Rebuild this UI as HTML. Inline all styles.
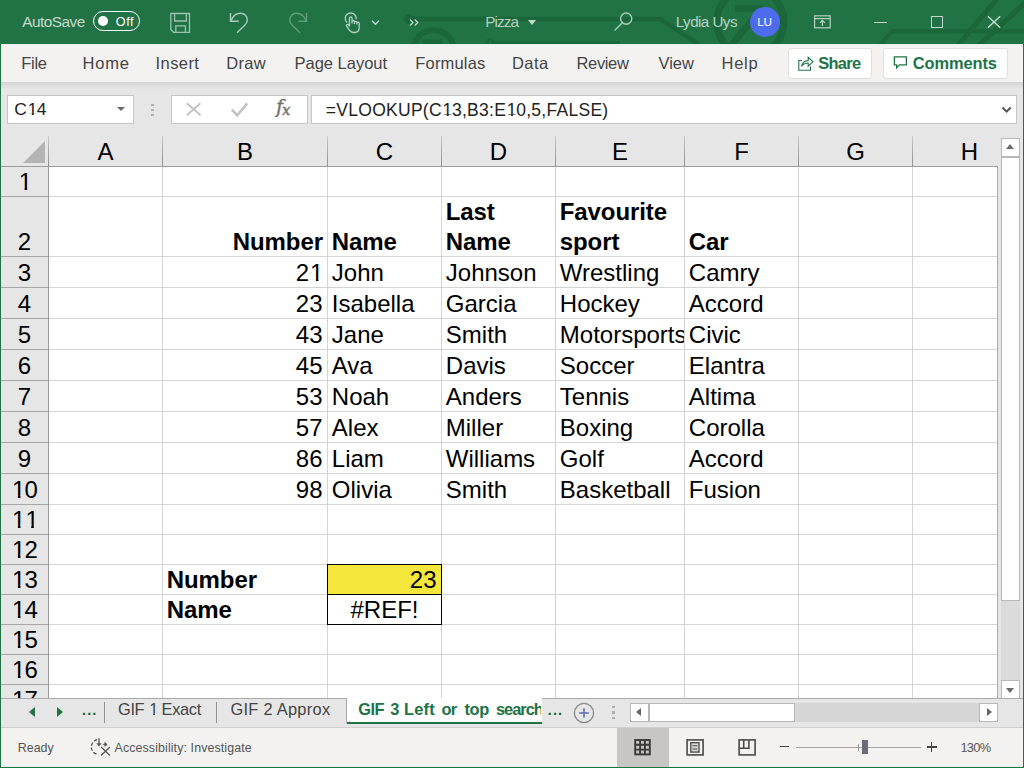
<!DOCTYPE html>
<html lang="en"><head><meta charset="utf-8"><title>Pizza - Excel</title>
<style>
html,body{margin:0;padding:0}
body{width:1024px;height:768px;position:relative;overflow:hidden;background:#e6e6e6;font-family:"Liberation Sans",sans-serif}
.r{position:absolute;display:block}
.t{position:absolute;white-space:nowrap;display:block}
.o{display:inline-block;position:relative;left:.04em;clip-path:polygon(0 0,100% 0,100% .735em,.35em .735em,.35em 100%,.24em 100%,.24em .735em,0 .735em)}
</style></head><body>
<div class="r" style="left:0px;top:0px;width:1024px;height:44px;background:#217346;"></div>
<svg class="r" style="left:0;top:0" width="1024" height="44" viewBox="0 0 1024 44" fill="none" stroke="#1b663b" stroke-width="4.4">
<circle cx="408.4" cy="18.8" r="2.6"/>
<path d="M411 19H660L699 44.5"/>
<circle cx="433.7" cy="50" r="20" stroke-width="6"/>
<path d="M422.5 43h20" stroke-width="7"/>
<path d="M492 43.2H620" stroke-width="4"/>
<circle cx="490" cy="43" r="3" stroke-width="3"/>
<circle cx="750.3" cy="22" r="33.5" stroke-width="7"/>
<path d="M731 46L760 10M735 8.3h28" stroke-width="7"/>
<path d="M1024 31.3H892L880 45" stroke-width="4"/>
<path d="M997 -1L958 45M1026 2L979 45" stroke-width="5"/>
</svg>
<span class="t" style="top:13.96px;font-size:15.4px;line-height:15.4px;color:#c3dacb;letter-spacing:-0.524px;left:22.16px;">AutoSave</span>
<div class="r" style="left:93px;top:11px;width:45px;height:18px;border:1.3px solid #fff;border-radius:11px"></div>
<div class="r" style="left:98px;top:16px;width:10px;height:10px;border-radius:50%;background:#fff"></div>
<span class="t" style="top:15.63px;font-size:12.6px;line-height:12.6px;color:#fff;letter-spacing:0.549px;left:115.8px;">Off</span>
<svg class="r" style="left:168px;top:10px" width="26" height="26" viewBox="0 0 26 26" fill="none" stroke="#9cc4ad" stroke-width="1.3">
<path d="M2.8 3.5H21.5V22.3H5.6L2.8 19.5Z"/><path d="M6.6 3.5V11H18.4V3.5"/><path d="M7.8 22.3V15.8H17.4V22.3"/></svg>
<svg class="r" style="left:226px;top:10px" width="26" height="26" viewBox="0 0 26 26" fill="none" stroke="#a9ccb8" stroke-width="1.4">
<path d="M4.5 3V11.3H12.8"/><path d="M5 11C7 5.5 11 3.3 14.5 3.3C18.6 3.3 21.3 6.4 21.3 10C21.3 12.5 20.3 13.8 18.5 15.6L11 22.8"/></svg>
<svg class="r" style="left:285px;top:10px" width="26" height="26" viewBox="0 0 26 26" fill="none" stroke="#5f9f7b" stroke-width="1.4">
<path d="M21.5 3V11.3H13.2"/><path d="M21 11C19 5.5 15 3.3 11.5 3.3C7.4 3.3 4.7 6.4 4.7 10C4.7 12.5 5.7 13.8 7.5 15.6L15 22.8"/></svg>
<svg class="r" style="left:341px;top:10px" width="24" height="26" viewBox="0 0 24 26" fill="none" stroke="#b4d2c0" stroke-width="1.3">
<path d="M6.2 12.6C4.9 11.5 4.2 10 4.2 8.4C4.2 5.3 6.7 3 9.7 3C12.7 3 15.2 5.3 15.2 8.4V9.2"/>
<path d="M8.4 16.5V8.2C8.4 7.3 9 6.8 9.7 6.8C10.4 6.8 11 7.3 11 8.2V13.5M11 11.6C11 10.9 11.6 10.5 12.2 10.5C12.9 10.5 13.4 10.9 13.4 11.6V14M13.4 12.3C13.4 11.7 14 11.3 14.6 11.3C15.3 11.3 15.8 11.7 15.8 12.3V14.5M15.8 13.2C15.8 12.6 16.4 12.2 17 12.2C17.7 12.2 18.2 12.7 18.2 13.3V17.5C18.2 20.5 16.4 22.5 13.6 22.5H12.6C10.8 22.5 9.6 21.8 8.6 20.4L5.6 16.2C5.1 15.4 5.4 14.8 6 14.5C6.6 14.2 7.2 14.4 7.7 15L8.4 16"/></svg>
<svg class="r" style="left:370px;top:18px" width="12" height="10" viewBox="0 0 12 10" fill="none" stroke="#c3dacb" stroke-width="1.3"><path d="M2 2.8L5.5 6.3L9 2.8"/></svg>
<svg class="r" style="left:408px;top:17px" width="14" height="12" viewBox="0 0 14 12" fill="none" stroke="#c3dacb" stroke-width="1.2"><path d="M2 2.5L5 5.5L2 8.5M6.8 2.5L9.8 5.5L6.8 8.5"/></svg>
<span class="t" style="top:13.96px;font-size:15.4px;line-height:15.4px;color:#b0d0be;letter-spacing:-1.005px;left:485.33px;">Pizza</span>
<div class="r" style="left:528px;top:20px;width:0;height:0;border-left:4.5px solid transparent;border-right:4.5px solid transparent;border-top:5px solid #c3dacb"></div>
<svg class="r" style="left:612px;top:10px" width="24" height="24" viewBox="0 0 24 24" fill="none" stroke="#a9ccb8" stroke-width="1.4"><circle cx="14.2" cy="8.6" r="5.6"/><path d="M10.3 12.8L2.6 20.5"/></svg>
<span class="t" style="top:14.43px;font-size:15.2px;line-height:15.2px;color:#b8d3c3;letter-spacing:-0.546px;left:675.75px;">Lydia Uys</span>
<div class="r" style="left:750px;top:7px;width:30px;height:30px;border-radius:50%;background:#4f6bed"></div>
<span class="t" style="top:17.01px;font-size:11.8px;line-height:11.8px;color:#fff;letter-spacing:-0.286px;left:757.33px;">LU</span>
<svg class="r" style="left:808px;top:10px" width="26" height="24" viewBox="0 0 26 24" fill="none" stroke="#b4d2c0" stroke-width="1.2">
<rect x="6.6" y="5.8" width="15.6" height="12"/><path d="M6.6 8.6H22.2"/><path d="M14.4 16V10.6M11.9 12.9L14.4 10.4L16.9 12.9"/></svg>
<div class="r" style="left:874px;top:21.9px;width:12.6px;height:1.2px;background:#bfd8c9;"></div>
<div class="r" style="left:931px;top:16px;width:10px;height:10px;border:1.2px solid #bfd8c9"></div>
<svg class="r" style="left:984px;top:12px" width="20" height="20" viewBox="0 0 20 20" fill="none" stroke="#c8decf" stroke-width="1.3"><path d="M3.9 4.2L16.2 15.8M16.2 4.2L3.9 15.8"/></svg>
<div class="r" style="left:0px;top:44px;width:1024px;height:38px;background:#f3f2f1;"></div>
<span class="t" style="top:54.83px;font-size:16.5px;line-height:16.5px;color:#444;letter-spacing:-0.268px;left:21.24px;">File</span>
<span class="t" style="top:54.83px;font-size:16.5px;line-height:16.5px;color:#444;letter-spacing:0.816px;left:82.44px;">Home</span>
<span class="t" style="top:54.83px;font-size:16.5px;line-height:16.5px;color:#444;letter-spacing:0.42px;left:155.57px;">Insert</span>
<span class="t" style="top:54.83px;font-size:16.5px;line-height:16.5px;color:#444;letter-spacing:0.331px;left:226.24px;">Draw</span>
<span class="t" style="top:54.83px;font-size:16.5px;line-height:16.5px;color:#444;letter-spacing:0.004px;left:294.44px;">Page Layout</span>
<span class="t" style="top:54.83px;font-size:16.5px;line-height:16.5px;color:#444;letter-spacing:0.168px;left:415.34px;">Formulas</span>
<span class="t" style="top:54.83px;font-size:16.5px;line-height:16.5px;color:#444;letter-spacing:0.435px;left:511.94px;">Data</span>
<span class="t" style="top:54.83px;font-size:16.5px;line-height:16.5px;color:#444;letter-spacing:-0.36px;left:576.54px;">Review</span>
<span class="t" style="top:54.83px;font-size:16.5px;line-height:16.5px;color:#444;letter-spacing:-0.011px;left:658.52px;">View</span>
<span class="t" style="top:54.83px;font-size:16.5px;line-height:16.5px;color:#444;letter-spacing:0.705px;left:721.54px;">Help</span>
<div class="r" style="left:788px;top:48px;width:82px;height:29px;background:#fff;border:1px solid #e1dfdd;border-radius:3px"></div>
<div class="r" style="left:883px;top:48px;width:123px;height:29px;background:#fff;border:1px solid #e1dfdd;border-radius:3px"></div>
<svg class="r" style="left:794.6px;top:52px" width="22" height="22" viewBox="0 0 22 22" fill="none" stroke="#217346" stroke-width="1.1">
<path d="M7 8.5H3.8V18.2H15.5V14.5"/><path d="M6.5 14.5C7.5 10.5 10 8.6 13.2 8.6V5.2L18 9.8L13.2 14.2V11C10.5 11 8.3 12 6.5 14.5Z"/></svg>
<span class="t" style="top:54.72px;font-size:16.4px;line-height:16.4px;color:#217346;font-weight:700;letter-spacing:-0.717px;left:818.35px;">Share</span>
<svg class="r" style="left:891px;top:53px" width="20" height="20" viewBox="0 0 20 20" fill="none" stroke="#217346" stroke-width="1.3">
<path d="M3.4 3.9H15.4V11.9H8.4L5.6 14.9V11.9H3.4Z"/></svg>
<span class="t" style="top:54.72px;font-size:16.4px;line-height:16.4px;color:#217346;font-weight:700;letter-spacing:-0.076px;left:912.74px;">Comments</span>
<div class="r" style="left:0px;top:82px;width:1024px;height:616px;background:#e6e6e6;"></div>
<div class="r" style="left:0;top:82px;width:1024px;height:7px;background:linear-gradient(#d4d4d4,#e6e6e6)"></div>
<div class="r" style="left:7px;top:95px;width:127px;height:29px;border:1px solid #c6c6c6;background:#fff;box-sizing:border-box;"></div>
<div class="r" style="left:171px;top:95px;width:137px;height:29px;border:1px solid #c6c6c6;background:#fff;box-sizing:border-box;"></div>
<div class="r" style="left:311px;top:95px;width:706px;height:29px;border:1px solid #c6c6c6;background:#fff;box-sizing:border-box;"></div>
<span class="t" style="top:100.87px;font-size:17.4px;line-height:17.4px;color:#222;letter-spacing:0.132px;left:14.33px;">C<span class="o">1</span>4</span>
<div class="r" style="left:117px;top:107px;width:0;height:0;border-left:4px solid transparent;border-right:4px solid transparent;border-top:4.5px solid #6a6a6a"></div>
<div class="r" style="left:151px;top:103.5px;width:2.6px;height:2.6px;background:#b0b0b0;"></div>
<div class="r" style="left:151px;top:108.5px;width:2.6px;height:2.6px;background:#b0b0b0;"></div>
<div class="r" style="left:151px;top:113.5px;width:2.6px;height:2.6px;background:#b0b0b0;"></div>
<svg class="r" style="left:184px;top:100px" width="20" height="20" viewBox="0 0 20 20" fill="none" stroke="#c2c2c2" stroke-width="1.9"><path d="M2.8 3.2L16.6 15.2M16.4 3.2L2.8 15.2"/></svg>
<svg class="r" style="left:229px;top:100px" width="22" height="20" viewBox="0 0 22 20" fill="none" stroke="#c2c2c2" stroke-width="2.5"><path d="M2.8 9.6L8.2 15.3L18.2 3.4"/></svg>
<span class="t" style="top:98.19px;font-size:18.2px;line-height:18.2px;color:#707070;font-family:'DejaVu Serif',serif;left:276.2px;-webkit-text-stroke:0.45px #707070;"><i>f</i></span>
<span class="t" style="top:102.58px;font-size:14.2px;line-height:14.2px;color:#707070;font-family:'DejaVu Serif',serif;left:282.3px;-webkit-text-stroke:0.45px #707070;"><i>x</i></span>
<span class="t" style="top:102.09px;font-size:17.5px;line-height:17.5px;color:#222;letter-spacing:0.281px;left:325.77px;">=VLOOKUP(C<span class="o">1</span>3,B3:E<span class="o">1</span>0,5,FALSE)</span>
<svg class="r" style="left:1000px;top:104px" width="14" height="12" viewBox="0 0 14 12" fill="none" stroke="#555" stroke-width="2"><path d="M2.5 3.5L6.6 7.6L10.7 3.5"/></svg>
<div class="r" style="left:49px;top:167px;width:948px;height:531px;background:#fff;"></div>
<div class="r" style="left:162px;top:167px;width:1px;height:531px;background:#d4d4d4;"></div>
<div class="r" style="left:327px;top:167px;width:1px;height:531px;background:#d4d4d4;"></div>
<div class="r" style="left:441px;top:167px;width:1px;height:531px;background:#d4d4d4;"></div>
<div class="r" style="left:555px;top:167px;width:1px;height:531px;background:#d4d4d4;"></div>
<div class="r" style="left:684px;top:167px;width:1px;height:531px;background:#d4d4d4;"></div>
<div class="r" style="left:798px;top:167px;width:1px;height:531px;background:#d4d4d4;"></div>
<div class="r" style="left:912px;top:167px;width:1px;height:531px;background:#d4d4d4;"></div>
<div class="r" style="left:49px;top:196px;width:948px;height:1px;background:#d4d4d4;"></div>
<div class="r" style="left:49px;top:256px;width:948px;height:1px;background:#d4d4d4;"></div>
<div class="r" style="left:49px;top:287px;width:948px;height:1px;background:#d4d4d4;"></div>
<div class="r" style="left:49px;top:318px;width:948px;height:1px;background:#d4d4d4;"></div>
<div class="r" style="left:49px;top:349px;width:948px;height:1px;background:#d4d4d4;"></div>
<div class="r" style="left:49px;top:380px;width:948px;height:1px;background:#d4d4d4;"></div>
<div class="r" style="left:49px;top:411px;width:948px;height:1px;background:#d4d4d4;"></div>
<div class="r" style="left:49px;top:442px;width:948px;height:1px;background:#d4d4d4;"></div>
<div class="r" style="left:49px;top:473px;width:948px;height:1px;background:#d4d4d4;"></div>
<div class="r" style="left:49px;top:504px;width:948px;height:1px;background:#d4d4d4;"></div>
<div class="r" style="left:49px;top:534px;width:948px;height:1px;background:#d4d4d4;"></div>
<div class="r" style="left:49px;top:564px;width:948px;height:1px;background:#d4d4d4;"></div>
<div class="r" style="left:49px;top:594px;width:948px;height:1px;background:#d4d4d4;"></div>
<div class="r" style="left:49px;top:624px;width:948px;height:1px;background:#d4d4d4;"></div>
<div class="r" style="left:49px;top:654px;width:948px;height:1px;background:#d4d4d4;"></div>
<div class="r" style="left:49px;top:684px;width:948px;height:1px;background:#d4d4d4;"></div>
<div class="r" style="left:1px;top:166px;width:997px;height:1px;background:#9b9b9b;"></div>
<div class="r" style="left:48px;top:136px;width:1px;height:30px;background:linear-gradient(#c8c8c8,#8e8e8e);"></div>
<div class="r" style="left:48px;top:166px;width:1px;height:532px;background:#9b9b9b;"></div>
<div class="r" style="left:162px;top:136px;width:1px;height:30px;background:linear-gradient(#c8c8c8,#8e8e8e);"></div>
<div class="r" style="left:327px;top:136px;width:1px;height:30px;background:linear-gradient(#c8c8c8,#8e8e8e);"></div>
<div class="r" style="left:441px;top:136px;width:1px;height:30px;background:linear-gradient(#c8c8c8,#8e8e8e);"></div>
<div class="r" style="left:555px;top:136px;width:1px;height:30px;background:linear-gradient(#c8c8c8,#8e8e8e);"></div>
<div class="r" style="left:684px;top:136px;width:1px;height:30px;background:linear-gradient(#c8c8c8,#8e8e8e);"></div>
<div class="r" style="left:798px;top:136px;width:1px;height:30px;background:linear-gradient(#c8c8c8,#8e8e8e);"></div>
<div class="r" style="left:912px;top:136px;width:1px;height:30px;background:linear-gradient(#c8c8c8,#8e8e8e);"></div>
<div class="r" style="left:1px;top:196px;width:47px;height:1px;background:#a6a6a6;"></div>
<div class="r" style="left:1px;top:256px;width:47px;height:1px;background:#a6a6a6;"></div>
<div class="r" style="left:1px;top:287px;width:47px;height:1px;background:#a6a6a6;"></div>
<div class="r" style="left:1px;top:318px;width:47px;height:1px;background:#a6a6a6;"></div>
<div class="r" style="left:1px;top:349px;width:47px;height:1px;background:#a6a6a6;"></div>
<div class="r" style="left:1px;top:380px;width:47px;height:1px;background:#a6a6a6;"></div>
<div class="r" style="left:1px;top:411px;width:47px;height:1px;background:#a6a6a6;"></div>
<div class="r" style="left:1px;top:442px;width:47px;height:1px;background:#a6a6a6;"></div>
<div class="r" style="left:1px;top:473px;width:47px;height:1px;background:#a6a6a6;"></div>
<div class="r" style="left:1px;top:504px;width:47px;height:1px;background:#a6a6a6;"></div>
<div class="r" style="left:1px;top:534px;width:47px;height:1px;background:#a6a6a6;"></div>
<div class="r" style="left:1px;top:564px;width:47px;height:1px;background:#a6a6a6;"></div>
<div class="r" style="left:1px;top:594px;width:47px;height:1px;background:#a6a6a6;"></div>
<div class="r" style="left:1px;top:624px;width:47px;height:1px;background:#a6a6a6;"></div>
<div class="r" style="left:1px;top:654px;width:47px;height:1px;background:#a6a6a6;"></div>
<div class="r" style="left:1px;top:684px;width:47px;height:1px;background:#a6a6a6;"></div>
<div class="r" style="left:997px;top:166px;width:1px;height:532px;background:#acacac;"></div>
<svg class="r" style="left:20px;top:138px" width="28" height="28" viewBox="0 0 28 28"><path d="M3 25H25V3Z" fill="#b4b4b4"/></svg>
<span class="t" style="top:139.68px;font-size:24px;line-height:24px;color:#000;left:105.5px;transform:translateX(-50%);">A</span>
<span class="t" style="top:139.68px;font-size:24px;line-height:24px;color:#000;left:245.0px;transform:translateX(-50%);">B</span>
<span class="t" style="top:139.68px;font-size:24px;line-height:24px;color:#000;left:384.5px;transform:translateX(-50%);">C</span>
<span class="t" style="top:139.68px;font-size:24px;line-height:24px;color:#000;left:498.5px;transform:translateX(-50%);">D</span>
<span class="t" style="top:139.68px;font-size:24px;line-height:24px;color:#000;left:620.0px;transform:translateX(-50%);">E</span>
<span class="t" style="top:139.68px;font-size:24px;line-height:24px;color:#000;left:741.5px;transform:translateX(-50%);">F</span>
<span class="t" style="top:139.68px;font-size:24px;line-height:24px;color:#000;left:855.5px;transform:translateX(-50%);">G</span>
<span class="t" style="top:139.68px;font-size:24px;line-height:24px;color:#000;left:969.5px;transform:translateX(-50%);">H</span>
<span class="t" style="top:169.68px;font-size:24px;line-height:24px;color:#000;left:24.5px;transform:translateX(-50%);"><span class="o">1</span></span>
<span class="t" style="top:229.68px;font-size:24px;line-height:24px;color:#000;left:24.5px;transform:translateX(-50%);">2</span>
<span class="t" style="top:260.68px;font-size:24px;line-height:24px;color:#000;left:24.5px;transform:translateX(-50%);">3</span>
<span class="t" style="top:291.68px;font-size:24px;line-height:24px;color:#000;left:24.5px;transform:translateX(-50%);">4</span>
<span class="t" style="top:322.68px;font-size:24px;line-height:24px;color:#000;left:24.5px;transform:translateX(-50%);">5</span>
<span class="t" style="top:353.68px;font-size:24px;line-height:24px;color:#000;left:24.5px;transform:translateX(-50%);">6</span>
<span class="t" style="top:384.68px;font-size:24px;line-height:24px;color:#000;left:24.5px;transform:translateX(-50%);">7</span>
<span class="t" style="top:415.68px;font-size:24px;line-height:24px;color:#000;left:24.5px;transform:translateX(-50%);">8</span>
<span class="t" style="top:446.68px;font-size:24px;line-height:24px;color:#000;left:24.5px;transform:translateX(-50%);">9</span>
<span class="t" style="top:477.68px;font-size:24px;line-height:24px;color:#000;left:24.5px;transform:translateX(-50%);"><span class="o">1</span>0</span>
<span class="t" style="top:507.68px;font-size:24px;line-height:24px;color:#000;left:24.5px;transform:translateX(-50%);"><span class="o">1</span><span class="o">1</span></span>
<span class="t" style="top:537.68px;font-size:24px;line-height:24px;color:#000;left:24.5px;transform:translateX(-50%);"><span class="o">1</span>2</span>
<span class="t" style="top:567.68px;font-size:24px;line-height:24px;color:#000;left:24.5px;transform:translateX(-50%);"><span class="o">1</span>3</span>
<span class="t" style="top:597.68px;font-size:24px;line-height:24px;color:#000;left:24.5px;transform:translateX(-50%);"><span class="o">1</span>4</span>
<span class="t" style="top:627.68px;font-size:24px;line-height:24px;color:#000;left:24.5px;transform:translateX(-50%);"><span class="o">1</span>5</span>
<span class="t" style="top:657.68px;font-size:24px;line-height:24px;color:#000;left:24.5px;transform:translateX(-50%);"><span class="o">1</span>6</span>
<span class="t" style="top:687.68px;font-size:24px;line-height:24px;color:#000;left:24.5px;transform:translateX(-50%);"><span class="o">1</span>7</span>
<span class="t" style="top:229.68px;font-size:24px;line-height:24px;color:#000;font-weight:700;letter-spacing:-0.1px;right:701.1px;">Number</span>
<span class="t" style="top:229.68px;font-size:24px;line-height:24px;color:#000;font-weight:700;letter-spacing:-0.1px;left:331.8px;">Name</span>
<span class="t" style="top:199.68px;font-size:24px;line-height:24px;color:#000;font-weight:700;letter-spacing:-0.1px;left:445.8px;">Last</span>
<span class="t" style="top:229.68px;font-size:24px;line-height:24px;color:#000;font-weight:700;letter-spacing:-0.1px;left:445.8px;">Name</span>
<span class="t" style="top:199.68px;font-size:24px;line-height:24px;color:#000;font-weight:700;letter-spacing:-0.1px;left:559.8px;">Favourite</span>
<span class="t" style="top:229.68px;font-size:24px;line-height:24px;color:#000;font-weight:700;letter-spacing:-0.1px;left:559.8px;">sport</span>
<span class="t" style="top:229.68px;font-size:24px;line-height:24px;color:#000;font-weight:700;letter-spacing:-0.1px;left:688.8px;">Car</span>
<span class="t" style="top:260.68px;font-size:24px;line-height:24px;color:#000;right:701.5px;">2<span class="o">1</span></span>
<span class="t" style="top:260.68px;font-size:24px;line-height:24px;color:#000;left:331.8px;">John</span>
<span class="t" style="top:260.68px;font-size:24px;line-height:24px;color:#000;left:445.8px;">Johnson</span>
<span class="t" style="top:260.68px;font-size:24px;line-height:24px;color:#000;left:559.8px;">Wrestling</span>
<span class="t" style="top:260.68px;font-size:24px;line-height:24px;color:#000;left:688.8px;">Camry</span>
<span class="t" style="top:291.68px;font-size:24px;line-height:24px;color:#000;right:701.5px;">23</span>
<span class="t" style="top:291.68px;font-size:24px;line-height:24px;color:#000;left:331.8px;">Isabella</span>
<span class="t" style="top:291.68px;font-size:24px;line-height:24px;color:#000;left:445.8px;">Garcia</span>
<span class="t" style="top:291.68px;font-size:24px;line-height:24px;color:#000;left:559.8px;">Hockey</span>
<span class="t" style="top:291.68px;font-size:24px;line-height:24px;color:#000;left:688.8px;">Accord</span>
<span class="t" style="top:322.68px;font-size:24px;line-height:24px;color:#000;right:701.5px;">43</span>
<span class="t" style="top:322.68px;font-size:24px;line-height:24px;color:#000;left:331.8px;">Jane</span>
<span class="t" style="top:322.68px;font-size:24px;line-height:24px;color:#000;left:445.8px;">Smith</span>
<div class="r" style="left:556px;top:319px;width:128px;height:30px;overflow:hidden"><span class="t" style="left:3.8px;top:3.68px;font-size:24px;line-height:24px;color:#000">Motorsports</span></div>
<span class="t" style="top:322.68px;font-size:24px;line-height:24px;color:#000;left:688.8px;">Civic</span>
<span class="t" style="top:353.68px;font-size:24px;line-height:24px;color:#000;right:701.5px;">45</span>
<span class="t" style="top:353.68px;font-size:24px;line-height:24px;color:#000;left:331.8px;">Ava</span>
<span class="t" style="top:353.68px;font-size:24px;line-height:24px;color:#000;left:445.8px;">Davis</span>
<span class="t" style="top:353.68px;font-size:24px;line-height:24px;color:#000;left:559.8px;">Soccer</span>
<span class="t" style="top:353.68px;font-size:24px;line-height:24px;color:#000;left:688.8px;">Elantra</span>
<span class="t" style="top:384.68px;font-size:24px;line-height:24px;color:#000;right:701.5px;">53</span>
<span class="t" style="top:384.68px;font-size:24px;line-height:24px;color:#000;left:331.8px;">Noah</span>
<span class="t" style="top:384.68px;font-size:24px;line-height:24px;color:#000;left:445.8px;">Anders</span>
<span class="t" style="top:384.68px;font-size:24px;line-height:24px;color:#000;left:559.8px;">Tennis</span>
<span class="t" style="top:384.68px;font-size:24px;line-height:24px;color:#000;left:688.8px;">Altima</span>
<span class="t" style="top:415.68px;font-size:24px;line-height:24px;color:#000;right:701.5px;">57</span>
<span class="t" style="top:415.68px;font-size:24px;line-height:24px;color:#000;left:331.8px;">Alex</span>
<span class="t" style="top:415.68px;font-size:24px;line-height:24px;color:#000;left:445.8px;">Miller</span>
<span class="t" style="top:415.68px;font-size:24px;line-height:24px;color:#000;left:559.8px;">Boxing</span>
<span class="t" style="top:415.68px;font-size:24px;line-height:24px;color:#000;left:688.8px;">Corolla</span>
<span class="t" style="top:446.68px;font-size:24px;line-height:24px;color:#000;right:701.5px;">86</span>
<span class="t" style="top:446.68px;font-size:24px;line-height:24px;color:#000;left:331.8px;">Liam</span>
<span class="t" style="top:446.68px;font-size:24px;line-height:24px;color:#000;left:445.8px;">Williams</span>
<span class="t" style="top:446.68px;font-size:24px;line-height:24px;color:#000;left:559.8px;">Golf</span>
<span class="t" style="top:446.68px;font-size:24px;line-height:24px;color:#000;left:688.8px;">Accord</span>
<span class="t" style="top:477.68px;font-size:24px;line-height:24px;color:#000;right:701.5px;">98</span>
<span class="t" style="top:477.68px;font-size:24px;line-height:24px;color:#000;left:331.8px;">Olivia</span>
<span class="t" style="top:477.68px;font-size:24px;line-height:24px;color:#000;left:445.8px;">Smith</span>
<span class="t" style="top:477.68px;font-size:24px;line-height:24px;color:#000;left:559.8px;">Basketball</span>
<span class="t" style="top:477.68px;font-size:24px;line-height:24px;color:#000;left:688.8px;">Fusion</span>
<span class="t" style="top:567.68px;font-size:24px;line-height:24px;color:#000;font-weight:700;letter-spacing:-0.1px;left:166.8px;">Number</span>
<span class="t" style="top:597.68px;font-size:24px;line-height:24px;color:#000;font-weight:700;letter-spacing:-0.1px;left:166.8px;">Name</span>
<div class="r" style="left:328px;top:565px;width:113px;height:29px;background:#f5e63c;"></div>
<div class="r" style="left:327px;top:564px;width:115px;height:1px;background:#000;"></div>
<div class="r" style="left:327px;top:594px;width:115px;height:1px;background:#000;"></div>
<div class="r" style="left:327px;top:624px;width:115px;height:1px;background:#000;"></div>
<div class="r" style="left:327px;top:564px;width:1px;height:61px;background:#000;"></div>
<div class="r" style="left:441px;top:564px;width:1px;height:61px;background:#000;"></div>
<span class="t" style="top:567.68px;font-size:24px;line-height:24px;color:#000;right:587.5px;">23</span>
<span class="t" style="top:597.68px;font-size:24px;line-height:24px;color:#000;left:384.5px;transform:translateX(-50%);">#REF!</span>
<div class="r" style="left:0px;top:698px;width:1024px;height:70px;background:#e6e6e6;"></div>
<div class="r" style="left:998px;top:136px;width:26px;height:562px;background:#e6e6e6;"></div>
<div class="r" style="left:1001px;top:138px;width:19px;height:19px;border:1px solid #b8b8b8;background:#fff;box-sizing:border-box;"></div>
<div class="r" style="left:1001px;top:157px;width:19px;height:523px;background:#dbdbdb;"></div>
<div class="r" style="left:1001px;top:157px;width:19px;height:444px;border:1px solid #b8b8b8;background:#fff;box-sizing:border-box;"></div>
<div class="r" style="left:1001px;top:680px;width:19px;height:19px;border:1px solid #b8b8b8;background:#fff;box-sizing:border-box;"></div>
<div class="r" style="left:1005.6px;top:144px;width:0;height:0;border-left:4.8px solid transparent;border-right:4.8px solid transparent;border-bottom:5px solid #6b6b6b"></div>
<div class="r" style="left:1006px;top:688px;width:0;height:0;border-left:4.7px solid transparent;border-right:4.7px solid transparent;border-top:5px solid #6b6b6b"></div>
<div class="r" style="left:1px;top:698px;width:1022px;height:1px;background:#ababab;"></div>
<div class="r" style="left:1px;top:727px;width:1022px;height:1px;background:#d0d0d0;"></div>
<div class="r" style="left:29px;top:707px;width:0;height:0;border-top:5px solid transparent;border-bottom:5px solid transparent;border-right:6px solid #217346"></div>
<div class="r" style="left:57px;top:707px;width:0;height:0;border-top:5px solid transparent;border-bottom:5px solid transparent;border-left:6px solid #217346"></div>
<span class="t" style="top:703.13px;font-size:14.5px;line-height:14.5px;color:#17653a;font-weight:700;letter-spacing:1.093px;left:82.02px;">...</span>
<div class="r" style="left:104px;top:702px;width:1px;height:21px;background:#929292;"></div>
<div class="r" style="left:216px;top:702px;width:1px;height:21px;background:#929292;"></div>
<span class="t" style="top:701.02px;font-size:16.4px;line-height:16.4px;color:#444;letter-spacing:-0.325px;left:117.98px;">GIF <span class="o">1</span> Exact</span>
<span class="t" style="top:701.02px;font-size:16.4px;line-height:16.4px;color:#444;letter-spacing:0.277px;left:230.48px;">GIF 2 Approx</span>
<div class="r" style="left:347px;top:698px;width:195px;height:25px;background:#fff;"></div>
<div class="r" style="left:346px;top:699px;width:1px;height:24px;background:#ababab;"></div>
<div class="r" style="left:347px;top:722px;width:195px;height:2px;background:#217346;"></div>
<div class="r" style="left:347px;top:699px;width:194px;height:23px;overflow:hidden">
<span class="t" style="top:2.02px;font-size:16.4px;line-height:16.4px;color:#217346;font-weight:700;letter-spacing:-0.488px;left:11.24px;">GIF</span>
<span class="t" style="top:2.02px;font-size:16.4px;line-height:16.4px;color:#217346;font-weight:700;left:43.23px;">3</span>
<span class="t" style="top:2.02px;font-size:16.4px;line-height:16.4px;color:#217346;font-weight:700;letter-spacing:0.173px;left:57.09px;">Left</span>
<span class="t" style="top:2.02px;font-size:16.4px;line-height:16.4px;color:#217346;font-weight:700;letter-spacing:-0.639px;left:94.48px;">or</span>
<span class="t" style="top:2.02px;font-size:16.4px;line-height:16.4px;color:#217346;font-weight:700;letter-spacing:-0.271px;left:117.4px;">top</span>
<span class="t" style="top:2.02px;font-size:16.4px;line-height:16.4px;color:#217346;font-weight:700;letter-spacing:-0.98px;left:148.93px;">search</span>
</div>
<span class="t" style="top:703.13px;font-size:14.5px;line-height:14.5px;color:#17653a;font-weight:700;letter-spacing:1.093px;left:547.82px;">...</span>
<svg class="r" style="left:572px;top:701px" width="24" height="24" viewBox="0 0 24 24" fill="none"><circle cx="12" cy="12" r="9.6" stroke="#8a8a8a" stroke-width="1.3"/><path d="M12 7.2V16.8M7.2 12H16.8" stroke="#5b6bb0" stroke-width="1.5"/></svg>
<div class="r" style="left:612px;top:705.5px;width:2.6px;height:2.6px;background:#b0b0b0;"></div>
<div class="r" style="left:612px;top:711px;width:2.6px;height:2.6px;background:#b0b0b0;"></div>
<div class="r" style="left:612px;top:716.5px;width:2.6px;height:2.6px;background:#b0b0b0;"></div>
<div class="r" style="left:631px;top:703px;width:366px;height:19px;background:#d6d6d6;"></div>
<div class="r" style="left:630px;top:703px;width:19px;height:19px;border:1px solid #b8b8b8;background:#fff;box-sizing:border-box;"></div>
<div class="r" style="left:649px;top:703px;width:146px;height:19px;border:1px solid #b8b8b8;background:#fff;box-sizing:border-box;"></div>
<div class="r" style="left:979px;top:703px;width:19px;height:19px;border:1px solid #b8b8b8;background:#fff;box-sizing:border-box;"></div>
<div class="r" style="left:636px;top:707.8px;width:0;height:0;border-top:4.7px solid transparent;border-bottom:4.7px solid transparent;border-right:5.6px solid #666"></div>
<div class="r" style="left:987px;top:707.8px;width:0;height:0;border-top:4.7px solid transparent;border-bottom:4.7px solid transparent;border-left:5.6px solid #666"></div>
<div class="r" style="left:1px;top:728px;width:1022px;height:39px;background:#f3f2f1;"></div>
<span class="t" style="top:742.30px;font-size:12.4px;line-height:12.4px;color:#555;letter-spacing:0.03px;left:17.78px;">Ready</span>
<svg class="r" style="left:88px;top:736px" width="24" height="24" viewBox="0 0 24 24" fill="none" stroke="#555" stroke-width="1.3">
<path d="M9.2 3.7A7.5 7.5 0 0 0 10.3 18.5" stroke-dasharray="3.4 1.8"/><path d="M11 2.2V8.5"/><path d="M8.4 7.2H13.6L11 10.4Z" fill="#555" stroke="none"/>
<path d="M14.6 8.4H17.6M16.8 6.5L19.2 8.4L16.8 10.3Z" fill="#555" stroke-width="0.8"/><path d="M13.1 11L21.9 19.5M21.9 11L13.1 19.5" stroke-width="1.2"/></svg>
<span class="t" style="top:742.30px;font-size:12.4px;line-height:12.4px;color:#555;letter-spacing:0.111px;left:114.57px;">Accessibility: Investigate</span>
<div class="r" style="left:617px;top:728px;width:52px;height:39px;background:#c8c6c4;"></div>
<svg class="r" style="left:633px;top:738px" width="20" height="18" viewBox="0 0 20 18" fill="none" stroke="#3b3a39" stroke-width="1.9"><rect x="2.2" y="2" width="14.6" height="14.4"/><path d="M2.2 6.8H16.8M2.2 11.6H16.8M7.1 2V16.4M11.9 2V16.4"/></svg>
<svg class="r" style="left:685px;top:738px" width="20" height="18" viewBox="0 0 20 18" fill="none" stroke="#4a4a4a" stroke-width="1.6"><rect x="2.1" y="1.9" width="16" height="15"/><rect x="5.8" y="4.7" width="8.2" height="9.4" fill="#d8d8d8" stroke-width="1.3"/><path d="M7.4 7.7H12.4M7.4 11H12.4" stroke-width="1.1"/></svg>
<svg class="r" style="left:737px;top:738px" width="20" height="18" viewBox="0 0 20 18" fill="none" stroke="#4a4a4a" stroke-width="1.6"><rect x="2.1" y="1.9" width="16" height="15"/><path d="M6.7 1.9V10.2M11.9 1.9V10.2H2.1"/></svg>
<div class="r" style="left:780px;top:746px;width:9px;height:1.3px;background:#444;"></div>
<div class="r" style="left:796px;top:746.6px;width:125px;height:1px;background:#a6a6a6;"></div>
<div class="r" style="left:858px;top:743.5px;width:1px;height:7.5px;background:#9a9a9a;"></div>
<div class="r" style="left:862px;top:740px;width:6px;height:14px;background:#6a6d78;"></div>
<div class="r" style="left:927px;top:746.3px;width:9.6px;height:1.3px;background:#444;"></div>
<div class="r" style="left:931.1px;top:742.2px;width:1.3px;height:9.5px;background:#444;"></div>
<span class="t" style="top:742.36px;font-size:12.8px;line-height:12.8px;color:#555;letter-spacing:-0.509px;left:960.04px;"><span class="o">1</span>30%</span>
<div class="r" style="left:0px;top:44px;width:1px;height:724px;background:#217346;"></div>
<div class="r" style="left:1023px;top:44px;width:1px;height:724px;background:#217346;"></div>
<div class="r" style="left:0px;top:767px;width:1024px;height:1px;background:#217346;"></div>
</body></html>
